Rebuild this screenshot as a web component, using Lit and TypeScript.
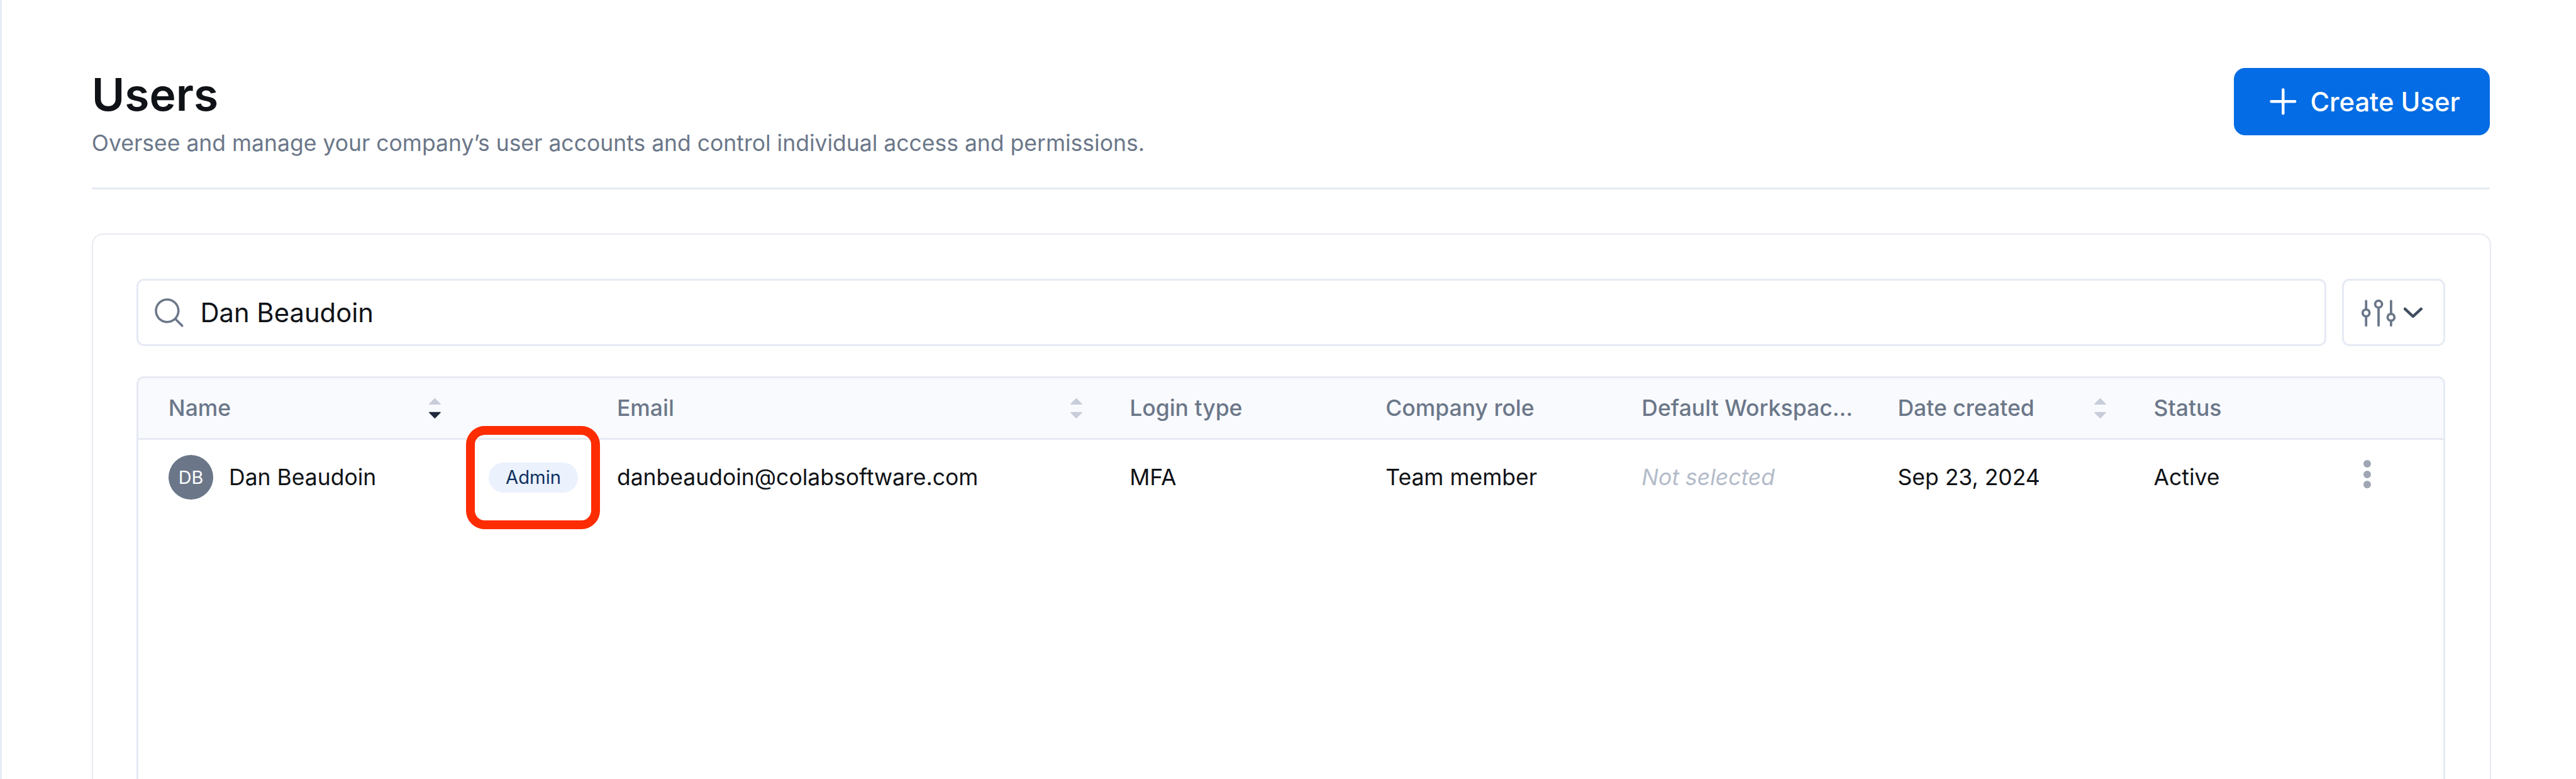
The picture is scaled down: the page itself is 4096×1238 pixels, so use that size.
import { LitElement, html, css, svg } from "lit";
import { customElement } from "lit/decorators.js";

const sortIcon = (active = false) => html`<svg class="sort ${active ? "active" : ""}" viewBox="0 0 21 36" width="21" height="36">
  <path class="up" d="M10.5 1.5 L20 11 Q20.5 12 19 12 H2 Q.5 12 1 11 Z" />
  <path class="down" d="M10.5 34.5 L20 25 Q20.5 24 19 24 H2 Q.5 24 1 25 Z" />
</svg>`;

const slider = (x: number, cy: number) => svg`
  ${cy - 5.5 > 3.5 ? svg`<line x1=${x} y1="3.5" x2=${x} y2=${cy - 5.5} />` : ""}
  <line x1=${x} y1=${cy + 5.5} x2=${x} y2="42.5" />
  <circle cx=${x} cy=${cy} r="5.5" />`;

@customElement("app-root")
export class AppRoot extends LitElement {
  static styles = css`
    :host {
      display: block;
      zoom: 0.99177;
      width: 4130px;
      height: 1248px;
      overflow: hidden;
      box-sizing: border-box;
      background: #fff;
      border-left: 3.1px solid #e6eaf3;
      font-family: Inter, "Liberation Sans", sans-serif;
      color: #0f1216;
    }
    .page {
      padding: 109px 138px 0 144px;
      display: flex;
      flex-direction: column;
    }
    .head {
      display: flex;
      justify-content: space-between;
      align-items: flex-start;
      height: 191px;
      border-bottom: 3.1px solid #e6eaf3;
    }
    h1 {
      margin: 0;
      font-size: 72px;
      line-height: 86px;
      font-weight: 600;
      color: #0f1216;
    }
    .sub {
      margin: 9px 0 0;
      font-size: 35.8px;
      line-height: 52px;
      color: #6b7789;
    }
    .create {
      width: 411px;
      height: 108px;
      box-sizing: border-box;
      background: #046ce4;
      border-radius: 18px;
      color: #fff;
      display: flex;
      align-items: center;
      padding-left: 58px;
      gap: 22px;
      font-size: 42.1px;
      font-weight: 500;
    }
    .create svg { display: block; }
    .card {
      margin: 71px -2px 0 0;
      border: 2.1px solid #e8eaf1;
      border-bottom: none;
      border-radius: 18px 18px 0 0;
      padding: 71px 72px 0 70px;
      height: 900px;
      box-sizing: border-box;
    }
    .tools {
      display: flex;
      gap: 25px;
      height: 108px;
    }
    .search {
      flex: 1;
      box-sizing: border-box;
      border: 3.1px solid #e6eaf3;
      border-radius: 12px;
      display: flex;
      align-items: center;
      padding-left: 26px;
      gap: 27px;
      font-size: 42.1px;
    }
    .filter {
      width: 165px;
      box-sizing: border-box;
      border: 3.1px solid #e6eaf3;
      border-radius: 12px;
      display: flex;
      align-items: center;
      justify-content: center;
      gap: 12px;
      padding-right: 5px;
    }
    .sliders { stroke: #6b7789; stroke-width: 3.8; fill: none; stroke-linecap: round; }
    .chev { stroke: #3f4d60; stroke-width: 4.5; fill: none; stroke-linecap: round; stroke-linejoin: round; }
    .table {
      margin-top: 48px;
      border: 3.1px solid #e6eaf3;
      border-bottom: none;
      border-radius: 12px 12px 0 0;
      height: 700px;
      overflow: hidden;
    }
    .row {
      display: grid;
      grid-template-columns: 513px 206px 822px repeat(4, 410.5px) 300px 1fr;
    }
    .hrow {
      height: 96px;
      background: #f9fafe;
      border-bottom: 3.1px solid #e6eaf3;
      color: #6b7789;
      font-size: 35.8px;
      font-weight: 500;
    }
    .drow { height: 120px; font-size: 35.8px; }
    .cell {
      display: flex;
      align-items: center;
      padding-left: 48px;
      min-width: 0;
      position: relative;
    }
    .hcell { justify-content: space-between; padding-right: 27px; }
    .hcell .label { white-space: nowrap; }
    .sort { display: block; flex: none; }
    .sort path { fill: #c8cdda; }
    .sort.active .down { fill: #1f2a3c; }
    .name { gap: 25px; white-space: nowrap; }
    .avatar {
      width: 72px;
      height: 72px;
      border-radius: 50%;
      background: #6b7789;
      color: #fff;
      font-size: 29px;
      display: flex;
      align-items: center;
      justify-content: center;
      flex: none;
    }
    .pill-wrap {
      position: relative;
      width: 144px;
      flex: none;
      display: flex;
    }
    .pill {
      width: 144px;
      height: 48px;
      border-radius: 24px;
      background: #ebf2fd;
      color: #0f3060;
      font-size: 29.5px;
      display: flex;
      align-items: center;
      justify-content: center;
    }
    .mark {
      position: absolute;
      left: -36px;
      top: -58px;
      width: 215px;
      height: 165px;
      box-sizing: border-box;
      border: 15px solid #fe2c02;
      border-radius: 30px;
    }
    .muted { color: #b4bbc9; font-style: italic; }
    .actions { padding-left: 84px; }
    .dots {
      display: flex;
      flex-direction: column;
      gap: 4.6px;
      margin-top: -10px;
    }
    .dots i { width: 12px; height: 12px; border-radius: 50%; background: #a0a6b4; display: block; }
  `;

  render() {
    return html`<div class="page">
      <div class="head">
        <div>
          <h1>Users</h1>
          <p class="sub">Oversee and manage your company’s user accounts and control individual access and permissions.</p>
        </div>
        <div class="create">
          <svg width="43" height="43" viewBox="0 0 43 43" fill="none" stroke="#fff" stroke-width="4.5" stroke-linecap="round">
            <path d="M21.5 2.5V40.5M2.5 21.5H40.5" />
          </svg>
          <span>Create User</span>
        </div>
      </div>
      <div class="card">
        <div class="tools">
          <div class="search">
            <svg width="46" height="46" viewBox="0 0 46 46" fill="none" stroke="#6b7789" stroke-width="3.6" stroke-linecap="round">
              <circle cx="20" cy="20" r="18" /><path d="M33 33 L44 44" />
            </svg>
            <span>Dan Beaudoin</span>
          </div>
          <div class="filter">
            <svg class="sliders" width="56" height="45" viewBox="0 0 56 45">
              ${slider(7.3, 22.5)}${slider(27.3, 8.5)}${slider(47.3, 29.5)}
            </svg>
            <svg class="chev" width="30" height="18" viewBox="0 0 30 18"><path d="M2 3 L15 15 L28 3" /></svg>
          </div>
        </div>
        <div class="table">
          <div class="row hrow">
            <div class="cell hcell"><span class="label">Name</span>${sortIcon(true)}</div>
            <div class="cell hcell"></div>
            <div class="cell hcell"><span class="label">Email</span>${sortIcon()}</div>
            <div class="cell hcell"><span class="label">Login type</span></div>
            <div class="cell hcell"><span class="label">Company role</span></div>
            <div class="cell hcell"><span class="label">Default Workspac...</span></div>
            <div class="cell hcell"><span class="label">Date created</span>${sortIcon()}</div>
            <div class="cell hcell"><span class="label">Status</span></div>
            <div class="cell"></div>
          </div>
          <div class="row drow">
            <div class="cell name"><span class="avatar">DB</span><span>Dan Beaudoin</span></div>
            <div class="cell"><span class="pill-wrap"><span class="pill">Admin</span><span class="mark"></span></span></div>
            <div class="cell">danbeaudoin@colabsoftware.com</div>
            <div class="cell">MFA</div>
            <div class="cell">Team member</div>
            <div class="cell muted">Not selected</div>
            <div class="cell">Sep 23, 2024</div>
            <div class="cell">Active</div>
            <div class="cell actions"><span class="dots"><i></i><i></i><i></i></span></div>
          </div>
        </div>
      </div>
    </div>`;
  }
}
